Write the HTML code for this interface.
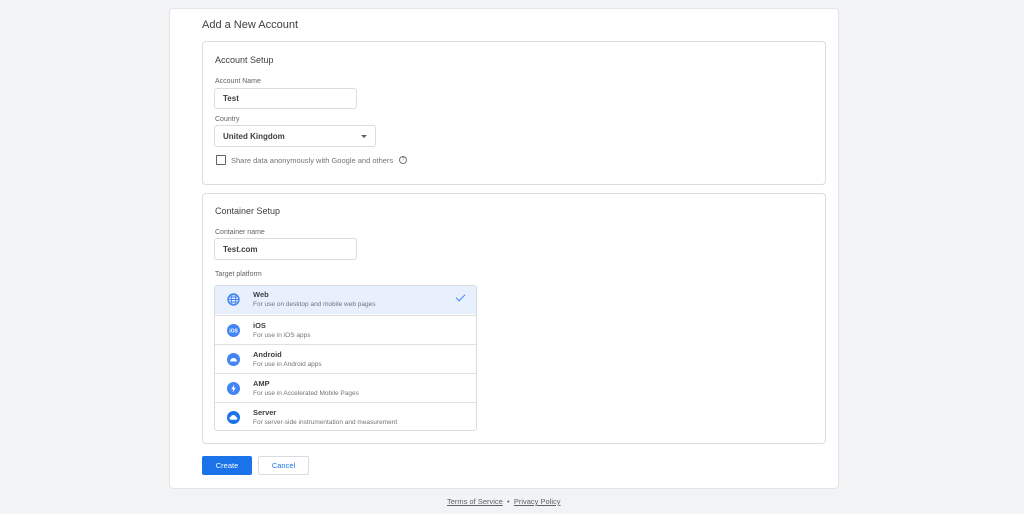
<!DOCTYPE html>
<html><head><style>
*{box-sizing:border-box;margin:0;padding:0}
body{width:1024px;height:514px;background:#f1f3f4;font-family:"Liberation Sans",sans-serif;position:relative;overflow:hidden;color:#202124}
.a{position:absolute}
.card{left:169px;top:8px;width:670px;height:481px;background:#fff;border:1px solid #e3e5e8;border-radius:4px}
.box{background:#fff;border:1px solid #dadce0;border-radius:4px}
.lbl{font-size:7px;color:#5f6368}
.inp{border:1px solid #dadce0;border-radius:3px;font-size:8px;font-weight:bold;padding-left:8px;display:flex;align-items:center;color:#3c4043}
.row{position:absolute;left:0;width:261px;height:29px;border-top:1px solid #e0e0e0}
.row .t{position:absolute;left:38px;top:5px;font-size:7.5px;font-weight:bold;color:#3c4043}
.row .s{position:absolute;left:38px;top:16px;font-size:6.5px;color:#70757a}
.row svg{position:absolute;left:12px;top:8px}
</style></head><body>
<div class="a card"></div>
<div class="a" style="left:202px;top:19px;font-size:11px;color:#3c4043">Add a New Account</div>
<div class="a box" style="left:202px;top:41px;width:624px;height:144px"></div>
<div class="a" style="left:215px;top:55px;font-size:9px;color:#3c4043">Account Setup</div>
<div class="a lbl" style="left:215px;top:78px">Account Name</div>
<div class="a inp" style="left:214px;top:88px;width:143px;height:21px">Test</div>
<div class="a lbl" style="left:215px;top:116px">Country</div>
<div class="a inp" style="left:214px;top:125px;width:162px;height:22px">United Kingdom<span style="position:absolute;right:8px;top:9px;border:3px solid transparent;border-top:3px solid #5f6368"></span></div>
<div class="a" style="left:216px;top:155px;width:10px;height:10px;border:1px solid #5f6368;border-radius:1px"></div>
<div class="a" style="left:231px;top:156px;font-size:7.5px;color:#70757a">Share data anonymously with Google and others</div>
<div class="a" style="left:399px;top:156px;width:8px;height:8px;border:1px solid #70757a;border-radius:50%;font-size:5px;text-align:center;line-height:6px;color:#70757a">?</div>
<div class="a box" style="left:202px;top:193px;width:624px;height:251px"></div>
<div class="a" style="left:215px;top:206px;font-size:9px;color:#3c4043">Container Setup</div>
<div class="a lbl" style="left:215px;top:229px">Container name</div>
<div class="a inp" style="left:214px;top:238px;width:143px;height:22px">Test.com</div>
<div class="a lbl" style="left:215px;top:271px">Target platform</div>
<div class="a" style="left:214px;top:285px;width:263px;height:146px;border:1px solid #dadce0;border-radius:3px;overflow:hidden">
<div class="row" style="top:-1px;background:#e8f0fe;border-top:none"><svg width="13" height="13" viewBox="0 0 13 13"><circle cx="6.5" cy="6.5" r="5.5" fill="none" stroke="#4285f4" stroke-width="1.4"/><ellipse cx="6.5" cy="6.5" rx="2.3" ry="5.5" fill="none" stroke="#4285f4" stroke-width="1"/><path d="M1 6.5H12M2 4H11M2 9H11" stroke="#4285f4" stroke-width="0.9"/></svg><div class="t">Web</div><div class="s">For use on desktop and mobile web pages</div><div class="a" style="left:243px;top:7px;width:5px;height:9px;border-right:1.5px solid #4285f4;border-bottom:1.5px solid #4285f4;transform:rotate(45deg)"></div></div>
<div class="row" style="top:29px"><svg width="13" height="13" viewBox="0 0 13 13"><circle cx="6.5" cy="6.5" r="6.5" fill="#4285f4"/><text x="6.5" y="8.3" font-size="5" fill="#fff" text-anchor="middle" font-family="Liberation Sans" font-weight="bold">iOS</text></svg><div class="t">iOS</div><div class="s">For use in iOS apps</div></div>
<div class="row" style="top:58px"><svg width="13" height="13" viewBox="0 0 13 13"><circle cx="6.5" cy="6.5" r="6.5" fill="#4285f4"/><path d="M3 8.5a3.5 3.5 0 0 1 7 0z" fill="#fff"/></svg><div class="t">Android</div><div class="s">For use in Android apps</div></div>
<div class="row" style="top:87px"><svg width="13" height="13" viewBox="0 0 13 13"><circle cx="6.5" cy="6.5" r="6.5" fill="#4285f4"/><path d="M7.3 2.5L4.2 7.2H6.2L5.6 10.5L8.8 5.8H6.8z" fill="#fff"/></svg><div class="t">AMP</div><div class="s">For use in Accelerated Mobile Pages</div></div>
<div class="row" style="top:116px"><svg width="13" height="13" viewBox="0 0 13 13"><circle cx="6.5" cy="6.5" r="6.5" fill="#1a73e8"/><path d="M3.5 8.8a1.6 1.6 0 0 1 0.3-3.1a2.8 2.8 0 0 1 5.3 0.4a1.4 1.4 0 0 1 0.4 2.7z" fill="#fff"/></svg><div class="t">Server</div><div class="s">For server-side instrumentation and measurement</div></div>
</div>
<div class="a" style="left:202px;top:456px;width:50px;height:19px;background:#1a73e8;border-radius:2px;color:#fff;font-size:7.5px;text-align:center;line-height:19px">Create</div>
<div class="a" style="left:258px;top:456px;width:51px;height:19px;border:1px solid #dadce0;border-radius:2px;color:#1a73e8;font-size:7.5px;text-align:center;line-height:17px">Cancel</div>
<div class="a" style="left:447px;top:497px;font-size:7.5px;color:#5f6368"><u>Terms of Service</u> &nbsp;•&nbsp; <u>Privacy Policy</u></div>
</body></html>
